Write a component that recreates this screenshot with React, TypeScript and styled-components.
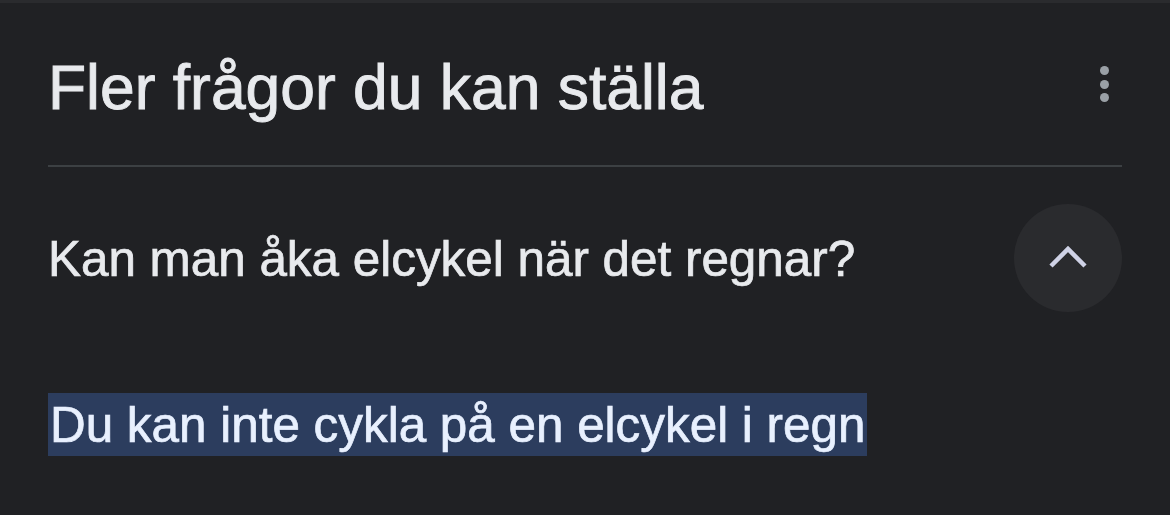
import React from 'react';
import styled, { createGlobalStyle } from 'styled-components';

const GlobalStyle = createGlobalStyle`
  html, body {
    margin: 0;
    padding: 0;
    background: #202124;
  }
  body {
    font-family: "Liberation Sans", Arial, sans-serif;
    -webkit-font-smoothing: antialiased;
  }
`;

const Card = styled.section`
  width: 1170px;
  height: 515px;
  box-sizing: border-box;
  background: #202124;
  border-top: 3px solid #2a2b2e;
  padding: 0 48px;
  overflow: hidden;
`;

const Header = styled.header`
  height: 162px;
  display: flex;
  align-items: center;
  justify-content: space-between;
  border-bottom: 2px solid #3c4043;
`;

const Title = styled.h2`
  margin: 8px 0 0;
  font-size: 62.4px;
  line-height: 62px;
  font-weight: 400;
  color: #e8eaed;
  -webkit-text-stroke: 0.9px #e8eaed;
`;

const MenuButton = styled.button`
  width: 36px;
  height: 48px;
  padding: 0 13px 0 0;
  border: none;
  background: transparent;
  display: flex;
  flex-direction: column;
  align-items: flex-end;
  justify-content: center;
  gap: 4.5px;
  box-sizing: border-box;
`;

const Dot = styled.span`
  width: 9px;
  height: 9px;
  border-radius: 50%;
  background: #9aa0a6;
`;

const QuestionRow = styled.div`
  display: flex;
  align-items: center;
  justify-content: space-between;
  padding-top: 37px;
`;

const Question = styled.div`
  font-size: 49.4px;
  line-height: 60px;
  color: #e8eaed;
  -webkit-text-stroke: 0.7px #e8eaed;
  margin-top: 1px;
`;

const ToggleButton = styled.button`
  width: 108px;
  height: 108px;
  border-radius: 50%;
  border: none;
  padding: 0;
  background: #2a2b2e;
  display: flex;
  align-items: center;
  justify-content: center;
`;

const Answer = styled.div`
  margin-top: 81px;
`;

const Highlight = styled.span`
  display: inline-block;
  height: 63px;
  line-height: 63px;
  padding: 0 2px;
  font-size: 49.4px;
  color: #e8f0fe;
  -webkit-text-stroke: 0.7px #e8f0fe;
  background: #2c3d5e;
`;

export default function App() {
  return (
    <>
      <GlobalStyle />
      <Card>
        <Header>
          <Title>Fler frågor du kan ställa</Title>
          <MenuButton aria-label="Fler alternativ">
            <Dot />
            <Dot />
            <Dot />
          </MenuButton>
        </Header>
        <QuestionRow>
          <Question>Kan man åka elcykel när det regnar?</Question>
          <ToggleButton aria-label="Dölj">
            <svg width="40" height="26" viewBox="0 0 40 26">
              <polyline
                points="3,21 20,4 37,21"
                fill="none"
                stroke="#cfd2e6"
                strokeWidth="4.5"
              />
            </svg>
          </ToggleButton>
        </QuestionRow>
        <Answer>
          <Highlight>Du kan inte cykla på en elcykel i regn</Highlight>
        </Answer>
      </Card>
    </>
  );
}
